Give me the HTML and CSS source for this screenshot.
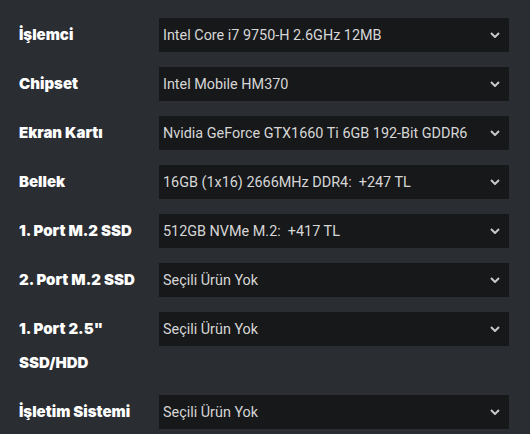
FILE: index.html
```html
<!DOCTYPE html>
<html lang="tr">
<head>
<meta charset="utf-8">
<link rel="stylesheet" href="styles.css">
</head>
<body>
<div class="form">
  <div class="row"><div class="label">İşlemci</div><div class="select"><span>Intel Core i7 9750-H 2.6GHz 12MB</span><svg class="chev" width="10" height="6" viewBox="0 0 10 6"><path d="M1 1l4 4 4-4" fill="none" stroke="#c8c8c8" stroke-width="2"/></svg></div></div>
  <div class="row"><div class="label">Chipset</div><div class="select"><span>Intel Mobile HM370</span><svg class="chev" width="10" height="6" viewBox="0 0 10 6"><path d="M1 1l4 4 4-4" fill="none" stroke="#c8c8c8" stroke-width="2"/></svg></div></div>
  <div class="row"><div class="label">Ekran Kartı</div><div class="select"><span>Nvidia GeForce GTX1660 Ti 6GB 192-Bit GDDR6</span><svg class="chev" width="10" height="6" viewBox="0 0 10 6"><path d="M1 1l4 4 4-4" fill="none" stroke="#c8c8c8" stroke-width="2"/></svg></div></div>
  <div class="row"><div class="label">Bellek</div><div class="select"><span>16GB (1x16) 2666MHz DDR4:&nbsp; +247 TL</span><svg class="chev" width="10" height="6" viewBox="0 0 10 6"><path d="M1 1l4 4 4-4" fill="none" stroke="#c8c8c8" stroke-width="2"/></svg></div></div>
  <div class="row"><div class="label">1. Port M.2 SSD</div><div class="select"><span>512GB NVMe M.2:&nbsp; +417 TL</span><svg class="chev" width="10" height="6" viewBox="0 0 10 6"><path d="M1 1l4 4 4-4" fill="none" stroke="#c8c8c8" stroke-width="2"/></svg></div></div>
  <div class="row"><div class="label">2. Port M.2 SSD</div><div class="select"><span>Seçili Ürün Yok</span><svg class="chev" width="10" height="6" viewBox="0 0 10 6"><path d="M1 1l4 4 4-4" fill="none" stroke="#c8c8c8" stroke-width="2"/></svg></div></div>
  <div class="row"><div class="label">1. Port 2.5"<br>SSD/HDD</div><div class="select"><span>Seçili Ürün Yok</span><svg class="chev" width="10" height="6" viewBox="0 0 10 6"><path d="M1 1l4 4 4-4" fill="none" stroke="#c8c8c8" stroke-width="2"/></svg></div></div>
  <div class="row"><div class="label">İşletim Sistemi</div><div class="select"><span>Seçili Ürün Yok</span><svg class="chev" width="10" height="6" viewBox="0 0 10 6"><path d="M1 1l4 4 4-4" fill="none" stroke="#c8c8c8" stroke-width="2"/></svg></div></div>
</div>
</body>
</html>
```
FILE: styles.css
```css
html, body {
  margin: 0;
  padding: 0;
  background: #2a2d32;
}
body {
  font-family: Roboto, "Liberation Sans", sans-serif;
}
.form {
  display: flex;
  flex-direction: column;
  gap: 15px;
  padding: 18px 21px 0 19px;
}
.row {
  display: flex;
  align-items: flex-start;
}
.label {
  width: 140px;
  flex: none;
  color: #ffffff;
  font-family: Inter, Roboto, sans-serif;
  font-weight: 900;
  font-size: 15px;
  line-height: 34px;
}
.select {
  flex: 1;
  height: 34px;
  background: #17181a;
  display: flex;
  align-items: center;
  justify-content: space-between;
  padding: 0 9px 0 4px;
  color: #d6d6d6;
  font-size: 14.4px;
}
.chev {
  display: block;
}
```
